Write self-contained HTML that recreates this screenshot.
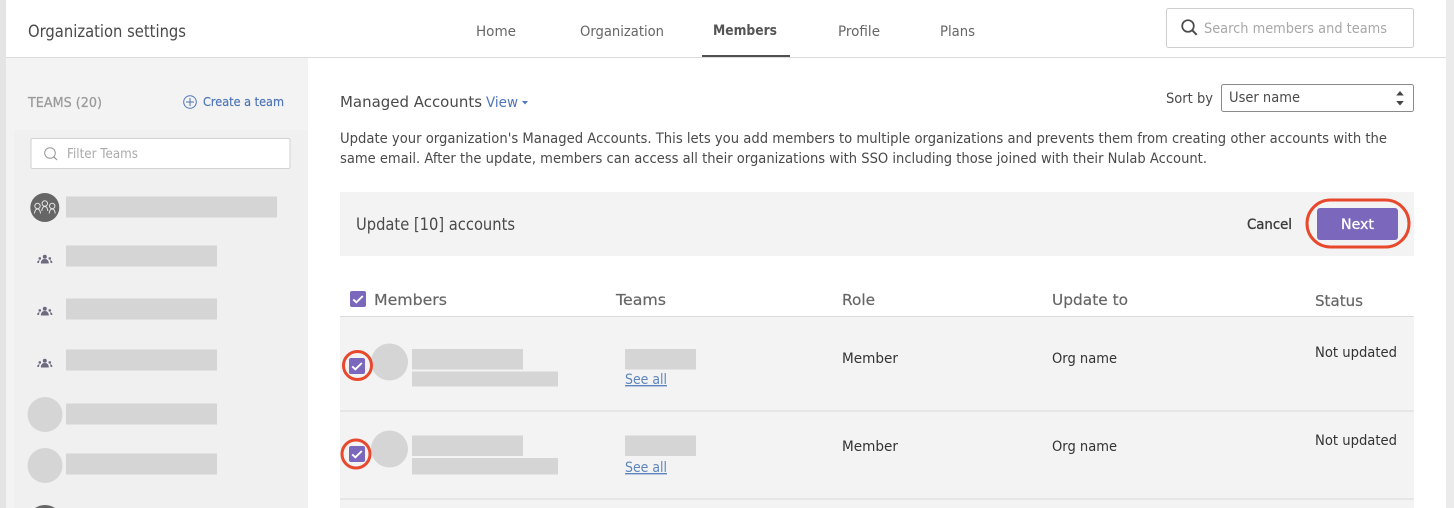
<!DOCTYPE html>
<html lang="en"><head><meta charset="utf-8"><title>Organization settings</title>
<style>
html,body{margin:0;padding:0;background:#fff;width:1454px;height:508px;overflow:hidden}
svg{display:block}
text{font-family:"DejaVu Sans","Liberation Sans",sans-serif;font-size:14px;fill:#4a4a4a}
.n{font-size:14px;fill:#666}
.b{font-weight:bold}
.h{fill:#666;font-size:15.500px;stroke:#666;stroke-width:.2}
.r{fill:#333}
.l{fill:#5f85c0;text-decoration:underline}
</style></head><body>
<svg width="1454" height="508" viewBox="0 0 1454 508" xmlns="http://www.w3.org/2000/svg">
<defs>
<g id="tm" fill="#6d6a80">
<circle cx="0" cy="-3.200" r="2"/><path d="M-4 3.500c0-2.800 1.500-4.500 4-4.500s4 1.700 4 4.500z"/>
<circle cx="-5" cy="-1.600" r="1.300"/><path d="M-7.500 3v-.8c0-1.300 1-2 2.300-2l-.7 2.800z"/>
<circle cx="5" cy="-1.600" r="1.300"/><path d="M7.500 3v-.8c0-1.300-1-2-2.300-2l.7 2.800z"/>
</g>
<g id="ck"><rect x="0" y="0" width="16" height="16" rx="2" fill="#7b68bd"/><path d="M3.200 8.400l3.200 2.900L12.800 5" fill="none" stroke="#fff" stroke-width="1.900"/></g>
</defs>
<rect width="1454" height="508" fill="#fff"/>
<rect x="0" y="0" width="6" height="508" fill="#e4e4e4"/>
<rect x="1446" y="0" width="8" height="508" fill="#ebebeb"/>
<rect x="6" y="57" width="1440" height="1" fill="#dcdcdc"/>
<rect x="6" y="58" width="302" height="450" fill="#f3f3f3"/>
<rect x="14" y="130" width="294" height="378" fill="#f0f0f0"/>

<text x="28" y="37" textLength="158" lengthAdjust="spacingAndGlyphs" style="font-size:16.500px">Organization settings</text>
<text class="n" x="476" y="36" textLength="40" lengthAdjust="spacingAndGlyphs">Home</text>
<text class="n" x="580" y="36" textLength="84" lengthAdjust="spacingAndGlyphs">Organization</text>
<text class="b" x="713" y="35" textLength="64" lengthAdjust="spacingAndGlyphs" style="fill:#555">Members</text>
<text class="n" x="838" y="36" textLength="42" lengthAdjust="spacingAndGlyphs">Profile</text>
<text class="n" x="940" y="36" textLength="35" lengthAdjust="spacingAndGlyphs">Plans</text>
<rect x="702" y="55" width="88" height="2" fill="#505050"/>

<rect x="1166.500" y="8.500" width="247" height="39" rx="2" fill="#fff" stroke="#cfcfcf"/>
<circle cx="1188" cy="26" r="5.800" fill="none" stroke="#4a4a4a" stroke-width="1.700"/>
<path d="M1192.200 30.200l4.500 4.600" stroke="#4a4a4a" stroke-width="2" fill="none"/>
<text x="1204" y="33" textLength="183" lengthAdjust="spacingAndGlyphs" style="fill:#a8a8a8">Search members and teams</text>

<text x="28" y="107" textLength="74" lengthAdjust="spacingAndGlyphs" style="fill:#9a9a9a;font-size:13.500px;stroke:#9a9a9a;stroke-width:.25">TEAMS (20)</text>
<circle cx="190" cy="102" r="6.300" fill="none" stroke="#4f76b8" stroke-width="1"/>
<path d="M186 102h8M190 98v8" stroke="#4f76b8" stroke-width="1"/>
<text x="203" y="106" textLength="81" lengthAdjust="spacingAndGlyphs" style="fill:#4f76b8;font-size:12.500px;stroke:#4f76b8;stroke-width:.2">Create a team</text>

<rect x="31" y="138.500" width="259" height="30" rx="1.500" fill="#fff" stroke="#d2d2d2"/>
<circle cx="50" cy="153" r="5.300" fill="none" stroke="#999" stroke-width="1"/>
<path d="M53.800 156.800l3.200 3.200" stroke="#999" stroke-width="1.200"/>
<text x="67" y="158" textLength="71" lengthAdjust="spacingAndGlyphs" style="fill:#aaa;font-size:13px">Filter Teams</text>

<circle cx="44.800" cy="207.500" r="14.500" fill="#666"/>
<g fill="none" stroke="#e4e4e4" stroke-width="1">
<circle cx="37.500" cy="206" r="2.700"/><path d="M34.500 213.500c.3-3 1.300-4.500 3-4.500s2.700 1.500 3 4.500"/>
<circle cx="44.800" cy="203.500" r="2.700"/><path d="M41.800 211c.3-3 1.300-4.500 3-4.500s2.700 1.500 3 4.500"/>
<circle cx="52.200" cy="206" r="2.700"/><path d="M49.200 213.500c.3-3 1.300-4.500 3-4.500s2.700 1.500 3 4.500"/>
</g>
<g fill="#d5d5d5">
<rect x="66" y="196.500" width="211" height="21"/>
<rect x="66" y="245.500" width="151" height="21"/>
<rect x="66" y="298.500" width="151" height="21"/>
<rect x="66" y="349.500" width="151" height="21"/>
<rect x="66" y="403.500" width="151" height="21"/>
<rect x="66" y="453.500" width="151" height="21"/>
<circle cx="45" cy="414.500" r="17.500"/>
<circle cx="45" cy="465.500" r="17.500"/>
</g>
<use href="#tm" x="44.800" y="260"/>
<use href="#tm" x="44.800" y="312"/>
<use href="#tm" x="44.800" y="364"/>
<path d="M35 508A18 18 0 0 1 55 508z" fill="#666"/>

<text x="340" y="107" textLength="142" lengthAdjust="spacingAndGlyphs" style="font-size:15.500px">Managed Accounts</text>
<text x="486" y="107" textLength="32" lengthAdjust="spacingAndGlyphs" style="fill:#4f76b8">View</text>
<path d="M522 101h6l-3 3.500z" fill="#4f76b8"/>
<text x="1166" y="103" textLength="47" lengthAdjust="spacingAndGlyphs">Sort by</text>
<rect x="1221.500" y="84.500" width="192" height="27" rx="2" fill="#fff" stroke="#8a8a8a"/>
<text x="1229" y="102" textLength="71" lengthAdjust="spacingAndGlyphs">User name</text>
<path d="M1400 91l3.800 4.500h-7.600zM1400 105.500l3.800-4.500h-7.600z" fill="#444"/>

<text x="340" y="143" textLength="1047" lengthAdjust="spacingAndGlyphs">Update your organization's Managed Accounts. This lets you add members to multiple organizations and prevents them from creating other accounts with the</text>
<text x="340" y="163" textLength="867" lengthAdjust="spacingAndGlyphs">same email. After the update, members can access all their organizations with SSO including those joined with their Nulab Account.</text>

<rect x="340" y="192" width="1074" height="64" fill="#f3f3f3"/>
<text x="356" y="230" textLength="159" lengthAdjust="spacingAndGlyphs" style="font-size:16.500px">Update [10] accounts</text>
<text x="1247" y="229" textLength="45" lengthAdjust="spacingAndGlyphs" style="fill:#3c3c3c;stroke:#3c3c3c;stroke-width:.35">Cancel</text>
<rect x="1317" y="208" width="81" height="32" rx="3" fill="#7b68bd"/>
<text x="1341" y="229" textLength="33" lengthAdjust="spacingAndGlyphs" style="fill:#fff;stroke:#fff;stroke-width:.3">Next</text>
<rect x="1307" y="200" width="102" height="47" rx="23.500" fill="none" stroke="#e8492d" stroke-width="3"/>

<use href="#ck" x="350" y="291"/>
<text class="h" x="374" y="305" textLength="73" lengthAdjust="spacingAndGlyphs">Members</text>
<text class="h" x="616" y="305" textLength="50" lengthAdjust="spacingAndGlyphs">Teams</text>
<text class="h" x="842" y="305" textLength="33" lengthAdjust="spacingAndGlyphs">Role</text>
<text class="h" x="1052" y="305" textLength="76" lengthAdjust="spacingAndGlyphs">Update to</text>
<text class="h" x="1315" y="306" textLength="48" lengthAdjust="spacingAndGlyphs">Status</text>
<rect x="340" y="316" width="1074" height="192" fill="#f3f3f3"/>
<rect x="340" y="316" width="1074" height="1" fill="#dcdcdc"/>
<rect x="340" y="410" width="1074" height="2" fill="#e6e6e6"/>
<rect x="340" y="498" width="1074" height="2" fill="#e6e6e6"/>

<g fill="#d5d5d5">
<circle cx="389.500" cy="362" r="18.500"/>
<rect x="412" y="349" width="111" height="20.500"/>
<rect x="412" y="371.500" width="146" height="15"/>
<rect x="625" y="349" width="71" height="20.500"/>
<circle cx="389.500" cy="449" r="18.500"/>
<rect x="412" y="435.500" width="111" height="20.500"/>
<rect x="412" y="458" width="146" height="16.500"/>
<rect x="625" y="435.500" width="71" height="20.500"/>
</g>
<use href="#ck" x="349" y="358"/>
<circle cx="357.500" cy="365.500" r="14" fill="none" stroke="#e8492d" stroke-width="3"/>
<use href="#ck" x="349" y="446"/>
<circle cx="356" cy="454" r="14" fill="none" stroke="#e8492d" stroke-width="3"/>

<text class="l" x="625" y="384" textLength="42" lengthAdjust="spacingAndGlyphs">See all</text>
<text class="l" x="625" y="472" textLength="42" lengthAdjust="spacingAndGlyphs">See all</text>
<text class="r" x="842" y="363" textLength="56" lengthAdjust="spacingAndGlyphs">Member</text>
<text class="r" x="842" y="451" textLength="56" lengthAdjust="spacingAndGlyphs">Member</text>
<text class="r" x="1052" y="363" textLength="65" lengthAdjust="spacingAndGlyphs">Org name</text>
<text class="r" x="1052" y="451" textLength="65" lengthAdjust="spacingAndGlyphs">Org name</text>
<text class="r" x="1315" y="357" textLength="82" lengthAdjust="spacingAndGlyphs">Not updated</text>
<text class="r" x="1315" y="445" textLength="82" lengthAdjust="spacingAndGlyphs">Not updated</text>
</svg>
</body></html>
